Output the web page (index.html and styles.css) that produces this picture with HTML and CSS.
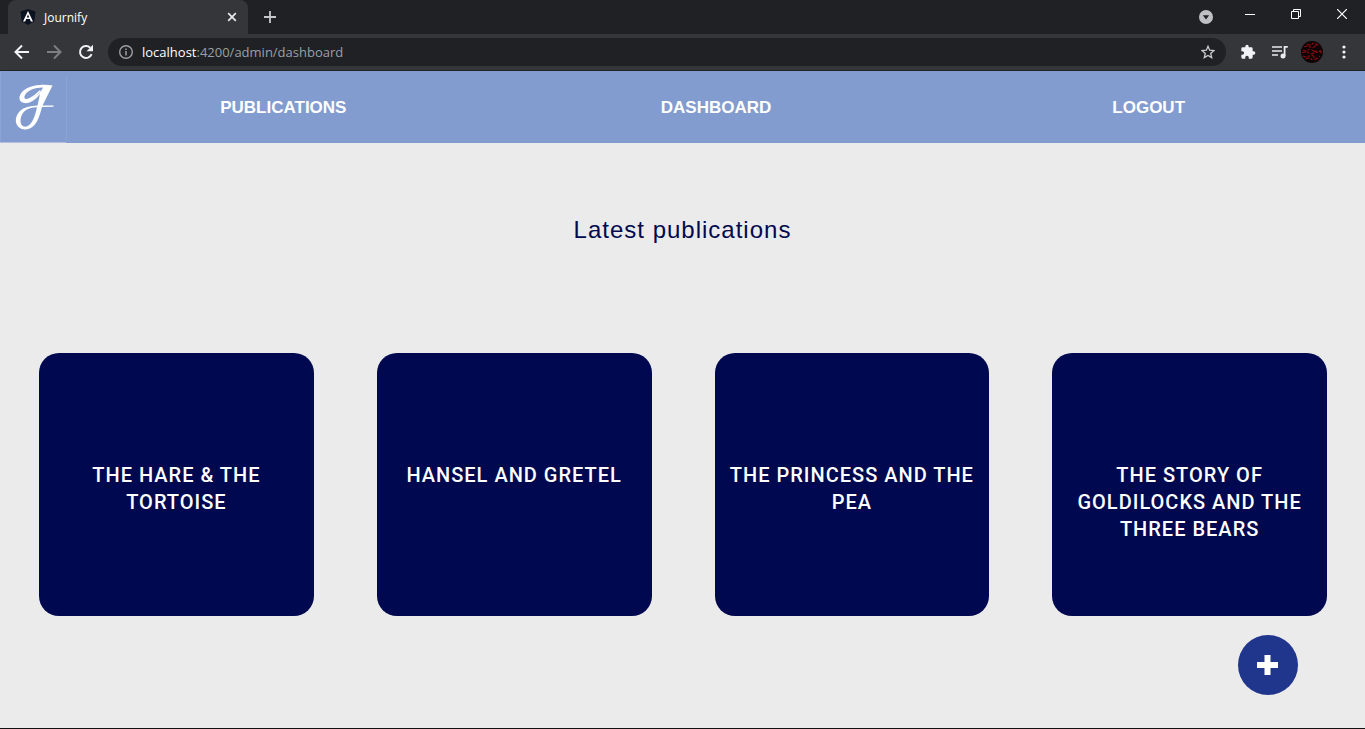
FILE: index.html
```html
<!DOCTYPE html>
<html lang="en">
<head>
<meta charset="utf-8">
<title>Journify</title>
<link rel="stylesheet" href="styles.css">
</head>
<body>
<div class="browser">
  <div class="tab-strip">
    <div class="tab">
      <svg class="tab-icon" width="16" height="16" viewBox="0 0 16 16"><path d="M8 0l7.500 2.600-1.200 9.800L8 16l-6.300-3.600L.5 2.600z" fill="#0b1220"/><path d="M8 2L3 12.400h2.200l.9-2.300h3.800l.9 2.300H13zM8 5.500l1.300 3.100H6.700z" fill="#fff"/></svg>
      <span class="tab-title">Journify</span>
      <button class="icon-button tab-close" aria-label="Close tab"><svg width="10" height="10" viewBox="0 0 10 10"><path d="M1.200 1.200l7.600 7.600M8.800 1.200L1.200 8.800" stroke="#e8eaed" stroke-width="1.700"/></svg></button>
    </div>
    <button class="icon-button new-tab" aria-label="New tab"><svg width="12" height="12" viewBox="0 0 12 12"><path d="M6 0v12M0 6h12" stroke="#c6c7c9" stroke-width="1.800"/></svg></button>
    <div class="window-controls">
      <button class="icon-button" aria-label="Search tabs"><svg width="14" height="14" viewBox="0 0 14 14"><circle cx="7" cy="7" r="7" fill="#bdc1c6"/><path d="M3.800 5.200h6.400L7 9.400z" fill="#202124"/></svg></button>
      <button class="icon-button" aria-label="Minimize"><svg width="10" height="10" viewBox="0 0 10 10"><path d="M0 5.500h10" stroke="#fff"/></svg></button>
      <button class="icon-button" aria-label="Restore"><svg width="10" height="10" viewBox="0 0 10 10" fill="none" stroke="#fff"><path d="M.5 2.500h7v7h-7zM2.500 2.500v-2h7v7h-2"/></svg></button>
      <button class="icon-button" aria-label="Close window"><svg width="10" height="10" viewBox="0 0 10 10"><path d="M0 0l10 10M10 0L0 10" stroke="#fff" stroke-width="1.200"/></svg></button>
    </div>
  </div>
  <div class="toolbar">
    <button class="icon-button" aria-label="Back"><svg width="16" height="16" viewBox="0 0 16 16" fill="none" stroke="#f1f3f4" stroke-width="2"><path d="M15 8H2.500M8 1.500L1.500 8 8 14.500"/></svg></button>
    <button class="icon-button" aria-label="Forward"><svg width="16" height="16" viewBox="0 0 16 16" fill="none" stroke="#7c7e82" stroke-width="2"><path d="M1 8h12.500M8 1.500L14.500 8 8 14.500"/></svg></button>
    <button class="icon-button" aria-label="Reload"><svg width="16" height="16" viewBox="0 0 16 16"><path d="M13.600 10.200A6 6 0 1 1 12.200 3.700" fill="none" stroke="#f1f3f4" stroke-width="2"/><path d="M15 .7v6.500H8.500z" fill="#f1f3f4"/></svg></button>
    <div class="address">
      <svg width="14" height="14" viewBox="0 0 14 14" fill="none" stroke="#9aa0a6"><circle cx="7" cy="7" r="6.300" stroke-width="1.400"/><path d="M7 6v4.500M7 3.400v1.500" stroke-width="1.500"/></svg>
      <a class="url" href="#"><span class="host">localhost</span>:4200/admin/dashboard</a>
      <button class="icon-button star" aria-label="Bookmark"><svg width="14" height="14" viewBox="0 0 16 16" fill="none" stroke="#c8cacd" stroke-width="1.500"><path d="M8 1.500l1.900 4.500 4.900.4-3.700 3.200 1.100 4.800L8 11.900l-4.200 2.500 1.100-4.800L1.200 6.400 6.100 6z"/></svg></button>
    </div>
    <div class="tools">
      <button class="icon-button" aria-label="Extensions"><svg width="16" height="16" viewBox="0 0 24 24" fill="#f1f3f4"><path d="M20.500 11H19V7a2 2 0 0 0-2-2h-4V3.500a2.500 2.500 0 0 0-5 0V5H4a2 2 0 0 0-2 2v3.800h1.500a2.700 2.700 0 0 1 0 5.400H2V20a2 2 0 0 0 2 2h3.800v-1.500a2.700 2.700 0 0 1 5.400 0V22H17a2 2 0 0 0 2-2v-4h1.500a2.500 2.500 0 0 0 0-5z"/></svg></button>
      <button class="icon-button" aria-label="Media"><svg width="16" height="14" viewBox="0 0 16 14"><path d="M0 2h10M0 6h10M0 10h6" stroke="#e8eaed" stroke-width="1.700"/><path d="M15.800 1.900h-3.200v9" fill="none" stroke="#e8eaed" stroke-width="1.800"/><circle cx="11" cy="11" r="2.500" fill="#e8eaed"/></svg></button>
      <button class="icon-button" aria-label="Profile"><svg width="22" height="22" viewBox="0 0 22 22"><circle cx="11" cy="11" r="11" fill="#0d0304"/><g stroke="#8d0b10" stroke-width="1.200" fill="none" stroke-dasharray="4 1 2 2"><path d="M6 3q3 2 5 0t5 1M3 6q3-2 6 0t5-1 5 1M2 9q3 2 5 0t6 1 7-1M1 12q4-2 7 0t6-1 7 1M2 15q3 2 6 0t5 1 6-1M5 18q3-2 5 0t7-1"/></g></svg></button>
      <button class="icon-button" aria-label="Menu"><svg width="4" height="14" viewBox="0 0 4 14" fill="#f1f3f4"><circle cx="2" cy="2" r="1.600"/><circle cx="2" cy="7" r="1.600"/><circle cx="2" cy="12" r="1.600"/></svg></button>
    </div>
  </div>
</div>
<header class="site-header">
  <a class="logo" href="#" aria-label="Journify">
    <svg width="67" height="72" viewBox="0 0 67 72">
      <path d="M.5 .5V71M66.500 5v65" fill="none" stroke="#8ba4d3"/>
      <path d="M0 71.500h66" stroke="#b3bfdc"/>
      <path fill="#fff" fill-rule="evenodd" d="M52.500 14.500C44 13 32 14 25 18.500c-6 4-7 10-3.500 12.500 5.500 3.500 14-1.500 18.500-8L37.500 34.500C30 35 24 36 20 40c-5 5-5.500 12-1.500 16 4.500 4 11 3 15.500-1.500 4-4 6-11 8-18.500l11.500-.3v-1.200l-11 0L52.500 14.500zM43 16.500l-1.800 3.500C37 24.500 29 30 25.500 28c-2.500-1.500-.5-5.500 3.500-8 4-2.600 9-3.500 14-3.500zM37 36.300c-1.500 7-3.500 13-6.500 16.500-3 3.500-7 4-9 1-2-3.500-1-9.500 3-13.500 3-3 7-3.800 12.500-4z"/>
      <path fill="none" stroke="#fff" stroke-width="1.500" stroke-linecap="round" d="M26 29c5-1 10-5 14-9"/>
    </svg>
  </a>
  <nav class="nav">
    <a href="#">PUBLICATIONS</a>
    <a href="#">DASHBOARD</a>
    <a href="#">LOGOUT</a>
  </nav>
</header>
<main class="content">
  <h1 class="heading">Latest publications</h1>
  <div class="cards">
    <a class="card" href="#">THE HARE &amp; THE TORTOISE</a>
    <a class="card" href="#">HANSEL AND GRETEL</a>
    <a class="card" href="#">THE PRINCESS AND THE PEA</a>
    <a class="card" href="#">THE STORY OF GOLDILOCKS AND THE THREE BEARS</a>
  </div>
</main>
<button class="add" aria-label="Add publication"><svg width="22" height="20" viewBox="0 0 22 20"><path d="M10.500 0v20M0 10h21" stroke="#fff" stroke-width="6"/></svg></button>
</body>
</html>
```
FILE: styles.css
```css
* { box-sizing: border-box; }
body {
  margin: 0;
  min-height: 100vh;
  display: flex;
  flex-direction: column;
  background: #ebebeb;
  border-bottom: 1px solid #111;
  font-family: "Liberation Sans", Arial, sans-serif;
}
a { color: inherit; text-decoration: none; }
.icon-button {
  display: flex;
  align-items: center;
  justify-content: center;
  padding: 0;
  border: 0;
  background: none;
}
.browser {
  border-bottom: 1px solid #202124;
  background: #35363a;
}
.tab-strip {
  display: flex;
  height: 34px;
  padding-left: 8px;
  background: #202124;
}
.tab {
  display: flex;
  align-items: center;
  width: 240px;
  padding: 0 10px 0 12px;
  gap: 8px;
  border-radius: 8px 8px 0 0;
  background: #35363a;
  color: #fff;
  font-family: "Open Sans", sans-serif;
  font-size: 12px;
}
.tab-close { width: 12px; height: 16px; margin-left: auto; }
.new-tab { width: 28px; margin-left: 8px; }
.window-controls { display: flex; height: 28px; margin-left: auto; }
.window-controls .icon-button { width: 46px; }
.window-controls .icon-button:first-child { width: 42px; height: 34px; }
.toolbar {
  display: flex;
  align-items: center;
  height: 36px;
  padding: 0 13px 0 14px;
  gap: 16px;
}
.address {
  display: flex;
  flex: 1;
  align-items: center;
  height: 28px;
  margin: 0 -2px;
  padding: 0 11px;
  gap: 9px;
  border-radius: 14px;
  background: #202124;
}
.url {
  color: #9aa0a6;
  font-family: "Open Sans", sans-serif;
  font-size: 13px;
}
.host { color: #fff; }
.star { margin-left: auto; }
.tools { display: flex; align-items: center; gap: 16px; }
.tools .icon-button { min-width: 16px; }
.tools .icon-button:nth-child(3) { margin: 0 -3px; }
.site-header {
  display: flex;
  height: 72px;
  background: #829ccf;
}
.logo svg { display: block; }
.nav {
  display: grid;
  flex: 1;
  grid-template-columns: repeat(3, 1fr);
  align-items: center;
  padding-top: 2px;
  color: #fff;
  font-size: 17px;
  font-weight: 700;
  text-align: center;
}
.content { flex: 1; padding-top: 72px; }
.heading {
  margin: 0 0 108px;
  color: #00094f;
  font-size: 24px;
  font-weight: 400;
  line-height: 30px;
  letter-spacing: 1px;
  text-align: center;
}
.cards {
  display: grid;
  grid-template-columns: repeat(4, 1fr);
  gap: 63px;
  padding: 0 38px 0 39px;
}
.card {
  min-height: 263px;
  padding: 109px 12px 20px;
  border-radius: 20px;
  background: #00094f;
  color: #fff;
  font-family: Roboto, sans-serif;
  font-size: 20px;
  font-weight: 500;
  line-height: 27px;
  letter-spacing: 1px;
  text-align: center;
}
.add {
  position: fixed;
  right: 67px;
  bottom: 34px;
  display: flex;
  align-items: center;
  justify-content: center;
  width: 60px;
  height: 60px;
  border: 0;
  border-radius: 50%;
  background: #20368c;
}
```
